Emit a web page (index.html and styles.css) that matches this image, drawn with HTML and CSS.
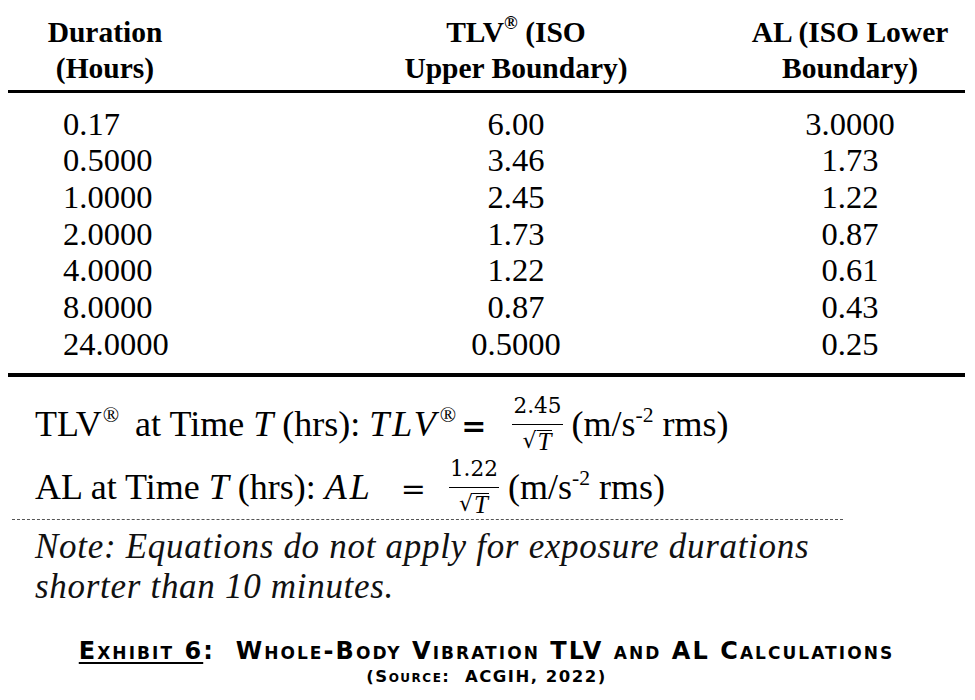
FILE: index.html
```html
<!DOCTYPE html>
<html lang="en">
<head>
<meta charset="utf-8">
<title>Exhibit 6: Whole-Body Vibration TLV and AL Calculations</title>
<link rel="stylesheet" href="styles.css">
</head>
<body>
<div class="page">
  <div class="table">
    <div class="thead">
      <div class="c1">Duration<br>(Hours)</div>
      <div class="c2">TLV<sup>®</sup> (ISO<br>Upper Boundary)</div>
      <div class="c3">AL (ISO Lower<br>Boundary)</div>
    </div>
    <div class="tbody">
      <div class="row"><div class="c1">0.17</div><div class="c2">6.00</div><div class="c3">3.0000</div></div>
      <div class="row"><div class="c1">0.5000</div><div class="c2">3.46</div><div class="c3">1.73</div></div>
      <div class="row"><div class="c1">1.0000</div><div class="c2">2.45</div><div class="c3">1.22</div></div>
      <div class="row"><div class="c1">2.0000</div><div class="c2">1.73</div><div class="c3">0.87</div></div>
      <div class="row"><div class="c1">4.0000</div><div class="c2">1.22</div><div class="c3">0.61</div></div>
      <div class="row"><div class="c1">8.0000</div><div class="c2">0.87</div><div class="c3">0.43</div></div>
      <div class="row"><div class="c1">24.0000</div><div class="c2">0.5000</div><div class="c3">0.25</div></div>
    </div>
  </div>

  <div class="formula">
    <div class="fline">TLV<sup class="rsup">®</sup> at Time <i>T</i> (hrs): <i class="mvar">TLV</i><sup class="isup">®</sup><span class="eq eq1">=</span><span class="frac"><span class="num">2.45</span><span class="den"><span class="rad">√</span><span class="rt">T</span></span></span> (m/s<sup>-2</sup> rms)</div>
    <div class="fline">AL at Time <i>T</i> (hrs): <i class="mvar">AL</i><span class="eq eq2">=</span><span class="frac"><span class="num">1.22</span><span class="den"><span class="rad">√</span><span class="rt">T</span></span></span> (m/s<sup>-2</sup> rms)</div>
  </div>
  <div class="dash"></div>

  <div class="note">Note: Equations do not apply for exposure durations<br>shorter than 10 minutes.</div>

  <div class="caption"><span class="ul">Exhibit 6</span>:&nbsp; Whole-Body Vibration TLV and AL Calculations</div>
  <div class="source">(Source:&nbsp; ACGIH, 2022)</div>
</div>
</body>
</html>
```

FILE: styles.css
```css
html, body {
  margin: 0;
  padding: 0;
  background: #ffffff;
}

body {
  color: #000000;
  font-family: "Liberation Serif", "Times New Roman", serif;
}

.page {
  width: 957px;
  padding: 14px 10px 0 8px;
}

/* ---------- table ---------- */
.thead,
.row {
  display: grid;
  grid-template-columns: 194px 533px 230px;
}

.thead {
  font-weight: bold;
  font-size: 29.5px;
  line-height: 36px;
  text-align: center;
  padding-bottom: 4px;
  border-bottom: 3px solid #000;
}

.thead sup {
  font-size: 0.62em;
  line-height: 0;
  vertical-align: 0.7em;
}

.c2 {
  padding-left: 95px;
  text-align: center;
}

.c3 {
  text-align: center;
}

.tbody {
  padding-top: 12.7px;
  padding-bottom: 10.6px;
  border-bottom: 4px solid #000;
}

.row {
  font-size: 32.5px;
  line-height: 36.67px;
}

.row .c1 {
  padding-left: 55px;
  text-align: left;
}

/* ---------- formulas ---------- */
.formula {
  margin-top: 16.4px;
  padding-left: 27px;
  font-size: 36px;
}

.fline {
  line-height: 63px;
  height: 63px;
  white-space: nowrap;
}

.fline sup {
  font-size: 0.6em;
  line-height: 0;
  vertical-align: 0.65em;
}

.fline .rsup {
  margin-left: 1px;
  margin-right: 7px;
}

.mvar {
  letter-spacing: 3px;
}

.fline .isup {
  font-style: normal;
  margin-left: 1px;
}

.eq {
  display: inline-block;
  font-family: "DejaVu Serif", serif;
  font-size: 30px;
}

.eq1 {
  margin-left: 5px;
  margin-right: 26px;
  font-weight: bold;
}

.eq2 {
  margin-left: 28px;
  margin-right: 23px;
}

.frac {
  display: inline-flex;
  flex-direction: column;
  align-items: stretch;
  vertical-align: 23px;
  margin-bottom: -44px;
  line-height: normal;
}

.num {
  font-family: "DejaVu Serif", serif;
  font-size: 21.6px;
  line-height: 22px;
  padding: 0 1px 7px;
  border-bottom: 1.5px solid #000;
  text-align: center;
}

.den {
  display: flex;
  justify-content: center;
  align-items: flex-start;
  padding-top: 3px;
  font-size: 25px;
  line-height: 25px;
}

.rad {
  font-family: "DejaVu Serif", serif;
  font-size: 22px;
  line-height: 25px;
}

.rt {
  font-style: italic;
  border-top: 1px solid #000;
  padding: 0 1px;
  line-height: 22px;
  margin-top: 2px;
}

.dash {
  margin-left: 4px;
  width: 831px;
  border-top: 1px dashed #555;
}

/* ---------- note ---------- */
.note {
  margin-top: 7px;
  padding-left: 27px;
  font-style: italic;
  font-size: 35px;
  line-height: 40px;
  letter-spacing: 0.7px;
  color: #111;
}

/* ---------- caption ---------- */
.caption,
.source {
  text-align: center;
  font-family: "DejaVu Sans", sans-serif;
  font-weight: bold;
  font-variant: small-caps;
  white-space: nowrap;
}

.caption {
  margin-top: 29.5px;
  font-size: 24px;
  line-height: 28px;
  letter-spacing: 2.05px;
}

.caption .ul {
  text-decoration: underline;
  text-decoration-thickness: 2px;
  text-underline-offset: 3px;
}

.source {
  font-size: 16.5px;
  line-height: 24px;
  letter-spacing: 1.5px;
}
```
